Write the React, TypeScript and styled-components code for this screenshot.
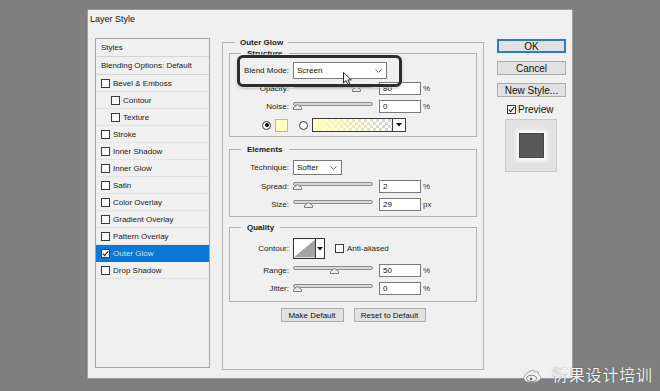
import React from "react";
import styled, { createGlobalStyle } from "styled-components";

const GlobalStyle = createGlobalStyle`
  html, body {
    margin: 0;
    padding: 0;
  }
  body {
    background: #7f7f7f;
    font-family: "Liberation Sans", Arial, sans-serif;
  }
`;

const Page = styled.div`
  position: relative;
  width: 660px;
  height: 391px;
  overflow: hidden;
  box-sizing: border-box;
  padding: 9px 0 0 87px;
  background: #7f7f7f;
`;

const Dialog = styled.div`
  width: 486px;
  height: 370px;
  box-sizing: border-box;
  background: #f0f0f0;
  border: 1px solid #9c9c9c;
  display: flex;
  flex-direction: column;
`;

const TitleBar = styled.div`
  height: 28px;
  box-sizing: border-box;
  padding: 4px 0 0 2px;
  font-size: 9px;
  line-height: 11px;
  color: #111;
`;

const Body = styled.div`
  display: flex;
  align-items: flex-start;
  padding: 0 6px 0 7px;
`;

/* ---------- styles list ---------- */

const Sidebar = styled.div`
  width: 115px;
  height: 330px;
  box-sizing: border-box;
  border: 1px solid #a5a5a5;
  background: #f0f0f0;
  margin-right: 12px;
  flex: none;
`;

const ListHeader = styled.div`
  height: 18px;
  box-sizing: border-box;
  border-bottom: 1px solid #d3d3d3;
  padding-left: 5px;
  display: flex;
  align-items: center;
  font-size: 8px;
  color: #1a1a1a;
`;

const ListItem = styled.div<{ $indent?: boolean; $selected?: boolean }>`
  height: 17px;
  box-sizing: border-box;
  border-bottom: 1px solid ${(p) => (p.$selected ? "#0a78d4" : "#e3e3e3")};
  padding-left: ${(p) => (p.$indent ? 15 : 5)}px;
  display: flex;
  align-items: center;
  gap: 3px;
  font-size: 8px;
  background: ${(p) => (p.$selected ? "#0a78d4" : "transparent")};
  color: ${(p) => (p.$selected ? "#cfe1f3" : "#1a1a1a")};
`;

const Box = styled.span`
  width: 9px;
  height: 9px;
  box-sizing: border-box;
  border: 1px solid #3a3a3a;
  background: #fff;
  flex: none;
  display: flex;
  align-items: center;
  justify-content: center;
`;

const Check = ({ on }: { on?: boolean }) => (
  <Box>
    {on && (
      <svg width="7" height="7" viewBox="0 0 7 7">
        <polyline points="0.8,3.6 2.7,5.6 6.3,1" fill="none" stroke="#222" strokeWidth="1.1" />
      </svg>
    )}
  </Box>
);

/* ---------- main panel ---------- */

const MainWrap = styled.div`
  position: relative;
  width: 262px;
  flex: none;
  margin-right: 13px;
`;

const OuterGroup = styled.fieldset`
  margin: 0;
  height: 332px;
  box-sizing: border-box;
  min-width: 0;
  border: 1px solid #b2b2b2;
  padding: 0 6px;
`;

const Legend = styled.legend<{ $ml: number; $pad: number }>`
  margin-left: ${(p) => p.$ml}px;
  padding: 0 ${(p) => p.$pad}px;
  font-size: 8px;
  font-weight: bold;
  line-height: 9px;
  color: #1a1a1a;
`;

const Group = styled.fieldset<{ $mt: number; $pt: number; $pb: number }>`
  margin: ${(p) => p.$mt}px 0 0;
  padding: ${(p) => p.$pt}px 0 ${(p) => p.$pb}px;
  min-width: 0;
  border: 1px solid #b2b2b2;
`;

const Row = styled.div<{ $h: number; $mt?: number; $pl?: number }>`
  display: flex;
  align-items: center;
  height: ${(p) => p.$h}px;
  margin-top: ${(p) => p.$mt ?? 0}px;
  padding-left: ${(p) => p.$pl ?? 0}px;
`;

const Label = styled.span`
  width: 59px;
  margin-right: 4px;
  flex: none;
  text-align: right;
  font-size: 8px;
  color: #1b1b1b;
`;

const Select = styled.div<{ $w: number; $h: number }>`
  width: ${(p) => p.$w}px;
  height: ${(p) => p.$h}px;
  box-sizing: border-box;
  border: 1px solid #7a7a7a;
  background: #fff;
  display: flex;
  align-items: center;
  justify-content: space-between;
  padding: 0 4px 0 3px;
  font-size: 8px;
  color: #111;
`;

const Chevron = () => (
  <svg width="7" height="4" viewBox="0 0 7 4">
    <polyline points="0.5,0.5 3.5,3.3 6.5,0.5" fill="none" stroke="#555" strokeWidth="0.9" />
  </svg>
);

const Slider = styled.div`
  position: relative;
  width: 82px;
  height: 13px;
  margin-right: 4px;
  flex: none;
`;

const Track = styled.div`
  position: absolute;
  left: 0;
  right: 2px;
  top: 2px;
  height: 4px;
  box-sizing: border-box;
  border: 1px solid #8e8e8e;
  border-radius: 2px;
  background: #d9d9d9;
`;

const ThumbSvg = styled.svg`
  position: absolute;
  top: 4px;
`;

const NumInput = styled.div`
  width: 42px;
  height: 13px;
  box-sizing: border-box;
  border: 1px solid #7a7a7a;
  background: #fff;
  padding-left: 3px;
  display: flex;
  align-items: center;
  font-size: 8px;
  color: #111;
  flex: none;
`;

const Unit = styled.span`
  margin-left: 2px;
  font-size: 8px;
  color: #333;
`;

const Radio = styled.span<{ $on?: boolean }>`
  width: 9px;
  height: 9px;
  box-sizing: border-box;
  border-radius: 50%;
  border: 1px solid #3a3a3a;
  background: #fff;
  flex: none;
  display: flex;
  align-items: center;
  justify-content: center;
  &::after {
    content: "";
    width: 4px;
    height: 4px;
    border-radius: 50%;
    background: ${(p) => (p.$on ? "#111" : "transparent")};
  }
`;

const Swatch = styled.span`
  width: 13px;
  height: 13px;
  box-sizing: border-box;
  border: 1px solid #b8b8a0;
  background: #ffffbe;
  margin: 0 11px 0 4px;
  flex: none;
`;

const GradientBar = styled.div`
  width: 94px;
  height: 14px;
  box-sizing: border-box;
  border: 1px solid #3c3c3c;
  margin-left: 4px;
  display: flex;
`;

const GradientFill = styled.div`
  flex: 1;
  background: linear-gradient(to right, #ffffbe, rgba(255, 255, 190, 0)),
    repeating-conic-gradient(#d2d2d2 0 25%, #ffffff 0 50%) 0 0 / 6px 6px;
`;

const DropPart = styled.div<{ $w: number }>`
  width: ${(p) => p.$w}px;
  border-left: 1px solid #3c3c3c;
  background: #fff;
  display: flex;
  align-items: center;
  justify-content: center;
  flex: none;
`;

const DownTriangle = () => (
  <svg width="6" height="4" viewBox="0 0 6 4">
    <polygon points="0,0 6,0 3,3.5" fill="#111" />
  </svg>
);

const ContourBox = styled.div`
  width: 32px;
  height: 21px;
  box-sizing: border-box;
  border: 1px solid #333;
  display: flex;
  flex: none;
`;

const CheckLabel = styled.span`
  display: flex;
  align-items: center;
  gap: 3px;
  margin-left: 10px;
  font-size: 8px;
  color: #1b1b1b;
`;

const ButtonRow = styled.div`
  display: flex;
  justify-content: center;
  gap: 10px;
  margin-top: 6px;
`;

const SmallButton = styled.div<{ $w: number }>`
  width: ${(p) => p.$w}px;
  height: 14px;
  box-sizing: border-box;
  border: 1px solid #adadad;
  background: #e1e1e1;
  display: flex;
  align-items: center;
  justify-content: center;
  font-size: 8px;
  color: #111;
`;

const Callout = styled.div`
  position: absolute;
  left: 15px;
  top: 17px;
  width: 165px;
  height: 32px;
  box-sizing: border-box;
  border: 3px solid #2c2c2c;
  border-radius: 6px;
  box-shadow: 0 0 0 1px rgba(255, 255, 255, 0.5), 0 1px 3px rgba(0, 0, 0, 0.35);
`;

const Cursor = styled.svg`
  position: absolute;
  left: 121px;
  top: 34px;
`;

/* ---------- right column ---------- */

const Actions = styled.div`
  width: 69px;
  flex: none;
  display: flex;
  flex-direction: column;
  padding-top: 1px;
`;

const DlgButton = styled.div<{ $primary?: boolean }>`
  height: 14px;
  box-sizing: border-box;
  margin-bottom: 8px;
  border: 1px solid ${(p) => (p.$primary ? "#2a7cc7" : "#adadad")};
  box-shadow: ${(p) => (p.$primary ? "inset 0 0 0 1px #2a7cc7" : "none")};
  background: #e1e1e1;
  display: flex;
  align-items: center;
  justify-content: center;
  font-size: 10px;
  color: #111;
`;

const PreviewToggle = styled.div`
  display: flex;
  align-items: center;
  gap: 2px;
  height: 9px;
  margin-left: 10px;
  font-size: 10px;
  color: #111;
`;

const PreviewBox = styled.div`
  width: 52px;
  height: 53px;
  box-sizing: border-box;
  margin: 5px 0 0 8px;
  background: #e2e2e2;
  border: 1px solid #cbcbcb;
  display: flex;
  align-items: center;
  justify-content: center;
`;

const PreviewSquare = styled.div`
  width: 25px;
  height: 25px;
  box-sizing: border-box;
  background: #585858;
  border: 1px solid #474747;
  box-shadow: 0 0 4px 3px #fbfbfb;
`;

/* ---------- watermark ---------- */

const Watermark = styled.div`
  position: absolute;
  left: 522px;
  top: 364px;
  display: flex;
  align-items: center;
  gap: 4px;
`;

const WatermarkText = styled.span`
  font-family: "Noto Sans CJK SC", "Noto Sans", sans-serif;
  font-size: 16px;
  line-height: 20px;
  letter-spacing: 0.8px;
  color: #f4f4f4;
  text-shadow: 0 0 1px rgba(0, 0, 0, 0.55);
`;

const WeiboLogo = () => (
  <svg width="26" height="20" viewBox="0 0 26 20">
    <path
      d="M10 6.5 C4.5 8.5 1.2 12 2 15 C3 18.8 11 19.8 16 17 C19.8 15 19.6 12.2 17 11.2 C16.2 10.8 17.2 9.3 16.2 8.3 C15.2 7.4 13.6 7.8 12.4 8.4 C12.8 6.8 12 5.9 10 6.5 Z"
      fill="#f2f2f2"
      stroke="#8a8a8a"
      strokeWidth="0.8"
    />
    <ellipse cx="9.6" cy="14.4" rx="5" ry="3.2" fill="none" stroke="#7a7a7a" strokeWidth="1" />
    <circle cx="9" cy="14.8" r="1.4" fill="#6a6a6a" />
    <path d="M16.5 4.6 A5.5 5.5 0 0 1 21.6 9.6" fill="none" stroke="#f2f2f2" strokeWidth="1.8" strokeLinecap="round" />
    <path d="M16.8 1.2 A9 9 0 0 1 25 9.4" fill="none" stroke="#f2f2f2" strokeWidth="1.8" strokeLinecap="round" />
  </svg>
);

/* ---------- data ---------- */

type StyleItem = { label: string; indent?: boolean; checked?: boolean; selected?: boolean };

const styleItems: StyleItem[] = [
  { label: "Bevel & Emboss" },
  { label: "Contour", indent: true },
  { label: "Texture", indent: true },
  { label: "Stroke" },
  { label: "Inner Shadow" },
  { label: "Inner Glow" },
  { label: "Satin" },
  { label: "Color Overlay" },
  { label: "Gradient Overlay" },
  { label: "Pattern Overlay" },
  { label: "Outer Glow", checked: true, selected: true },
  { label: "Drop Shadow" },
];

const Thumb = ({ pct }: { pct: number }) => (
  <ThumbSvg width="9" height="6" viewBox="0 0 9 6" style={{ left: 4 + (pct / 100) * 74 - 4.5 }}>
    <polygon points="4.5,0.5 8.5,3.5 8.5,5.5 0.5,5.5 0.5,3.5" fill="#ececec" stroke="#7c7c7c" strokeWidth="1" />
  </ThumbSvg>
);

const SliderRow = ({
  label,
  value,
  pct,
  unit,
  mt,
}: {
  label: string;
  value: string;
  pct: number;
  unit: string;
  mt: number;
}) => (
  <Row $h={13} $mt={mt}>
    <Label>{label}</Label>
    <Slider>
      <Track />
      <Thumb pct={pct} />
    </Slider>
    <NumInput>{value}</NumInput>
    <Unit>{unit}</Unit>
  </Row>
);

export default function App() {
  return (
    <Page>
      <GlobalStyle />
      <Dialog>
        <TitleBar>Layer Style</TitleBar>
        <Body>
          <Sidebar>
            <ListHeader>Styles</ListHeader>
            <ListHeader>Blending Options: Default</ListHeader>
            {styleItems.map((s) => (
              <ListItem key={s.label} $indent={s.indent} $selected={s.selected}>
                <Check on={s.checked} />
                {s.label}
              </ListItem>
            ))}
          </Sidebar>

          <MainWrap>
            <OuterGroup>
              <Legend $ml={6} $pad={5}>
                Outer Glow
              </Legend>

              <Group $mt={2} $pt={4} $pb={4}>
                <Legend $ml={11} $pad={6}>
                  Structure
                </Legend>
                <Row $h={17}>
                  <Label>Blend Mode:</Label>
                  <Select $w={94} $h={17}>
                    Screen
                    <Chevron />
                  </Select>
                </Row>
                <SliderRow label="Opacity:" value="80" pct={80} unit="%" mt={3} />
                <SliderRow label="Noise:" value="0" pct={0} unit="%" mt={5} />
                <Row $h={14} $mt={5} $pl={32}>
                  <Radio $on />
                  <Swatch />
                  <Radio />
                  <GradientBar>
                    <GradientFill />
                    <DropPart $w={12}>
                      <DownTriangle />
                    </DropPart>
                  </GradientBar>
                </Row>
              </Group>

              <Group $mt={8} $pt={6} $pb={5}>
                <Legend $ml={11} $pad={6}>
                  Elements
                </Legend>
                <Row $h={15}>
                  <Label>Technique:</Label>
                  <Select $w={49} $h={15}>
                    Softer
                    <Chevron />
                  </Select>
                </Row>
                <SliderRow label="Spread:" value="2" pct={1} unit="%" mt={5} />
                <SliderRow label="Size:" value="29" pct={16} unit="px" mt={5} />
              </Group>

              <Group $mt={6} $pt={6} $pb={6}>
                <Legend $ml={11} $pad={6}>
                  Quality
                </Legend>
                <Row $h={21}>
                  <Label>Contour:</Label>
                  <ContourBox>
                    <svg width="23" height="19" viewBox="0 0 23 19">
                      <rect width="23" height="19" fill="#fff" />
                      <polygon points="0,19 23,0 23,19" fill="#a3a3a3" />
                    </svg>
                    <DropPart $w={8}>
                      <DownTriangle />
                    </DropPart>
                  </ContourBox>
                  <CheckLabel>
                    <Check />
                    Anti-aliased
                  </CheckLabel>
                </Row>
                <SliderRow label="Range:" value="50" pct={50} unit="%" mt={5} />
                <SliderRow label="Jitter:" value="0" pct={0} unit="%" mt={5} />
              </Group>

              <ButtonRow>
                <SmallButton $w={63}>Make Default</SmallButton>
                <SmallButton $w={72}>Reset to Default</SmallButton>
              </ButtonRow>
            </OuterGroup>

            <Callout />
            <Cursor width="10" height="14" viewBox="0 0 10 14">
              <path d="M0.5 0.5 L0.5 11 L3 8.6 L5 12.8 L6.8 12 L4.9 7.9 L8.3 7.9 Z" fill="#fff" stroke="#111" strokeWidth="0.9" />
            </Cursor>
          </MainWrap>

          <Actions>
            <DlgButton $primary>OK</DlgButton>
            <DlgButton>Cancel</DlgButton>
            <DlgButton>New Style...</DlgButton>
            <PreviewToggle>
              <Check on />
              Preview
            </PreviewToggle>
            <PreviewBox>
              <PreviewSquare />
            </PreviewBox>
          </Actions>
        </Body>
      </Dialog>

      <Watermark>
        <WeiboLogo />
        <WatermarkText>衍果设计培训</WatermarkText>
      </Watermark>
    </Page>
  );
}
